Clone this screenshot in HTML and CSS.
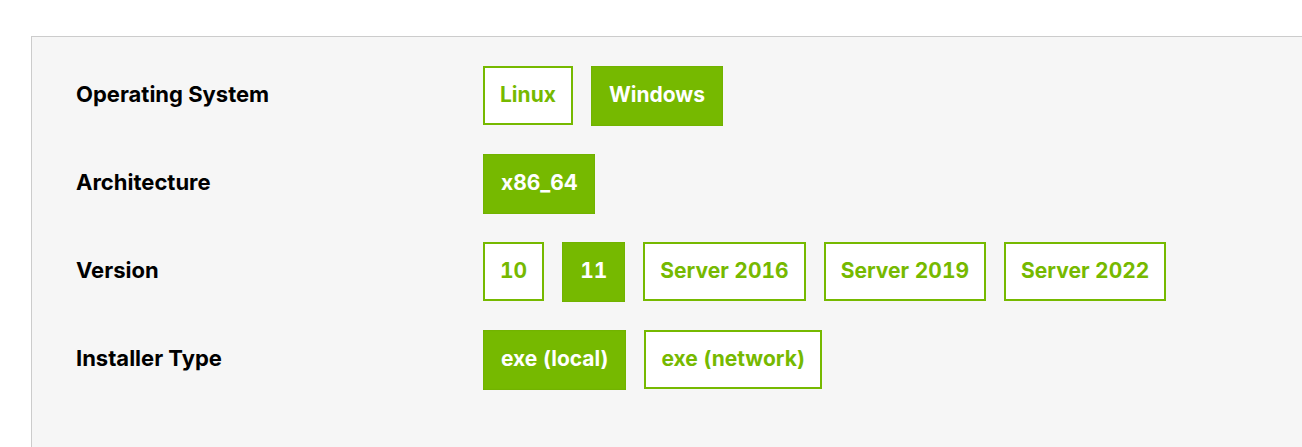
FILE: index.html
```html
<!DOCTYPE html>
<html>
<head>
<meta charset="utf-8">
<link rel="stylesheet" href="styles.css">
</head>
<body>
<div class="panel">
  <div class="row">
    <div class="label">Operating System</div>
    <div class="options">
      <button class="opt">Linux</button>
      <button class="opt active">Windows</button>
    </div>
  </div>
  <div class="row">
    <div class="label">Architecture</div>
    <div class="options">
      <button class="opt active">x86_64</button>
    </div>
  </div>
  <div class="row">
    <div class="label">Version</div>
    <div class="options">
      <button class="opt">10</button>
      <button class="opt active">11</button>
      <button class="opt">Server 2016</button>
      <button class="opt">Server 2019</button>
      <button class="opt">Server 2022</button>
    </div>
  </div>
  <div class="row">
    <div class="label">Installer Type</div>
    <div class="options">
      <button class="opt active">exe (local)</button>
      <button class="opt">exe (network)</button>
    </div>
  </div>
</div>
</body>
</html>
```
FILE: styles.css
```css
html, body {
  margin: 0;
  padding: 0;
  background: #ffffff;
  overflow: hidden;
}
body {
  width: 1302px;
  height: 447px;
  font-family: Inter, "Liberation Sans", sans-serif;
}
.panel {
  margin: 36px 0 0 31px;
  width: 1300px;
  height: 500px;
  box-sizing: border-box;
  border: 1px solid #cccccc;
  background: #f6f6f6;
  padding: 29px 0 0 44px;
  display: flex;
  flex-direction: column;
  gap: 29px;
}
.row {
  display: flex;
  align-items: flex-start;
  height: 59px;
}
.label {
  width: 407px;
  flex: none;
  height: 59px;
  box-sizing: border-box;
  padding-bottom: 4px;
  display: flex;
  align-items: center;
  font-size: 22px;
  font-weight: 700;
  color: #000000;
}
.options {
  display: flex;
  align-items: flex-start;
  gap: 18px;
}
.opt {
  box-sizing: border-box;
  height: 59px;
  padding: 0 15px 3px;
  border: 2px solid #76b900;
  background: #ffffff;
  color: #76b900;
  font-family: inherit;
  font-size: 21px;
  font-weight: 700;
  font-variant-numeric: tabular-nums;
  cursor: pointer;
}
.opt.active {
  height: 60px;
  padding: 0 18px 3px;
  border: none;
  background: #76b900;
  color: #ffffff;
  box-shadow: inset 0 0 2px rgba(0, 0, 0, 0.12);
}
```
